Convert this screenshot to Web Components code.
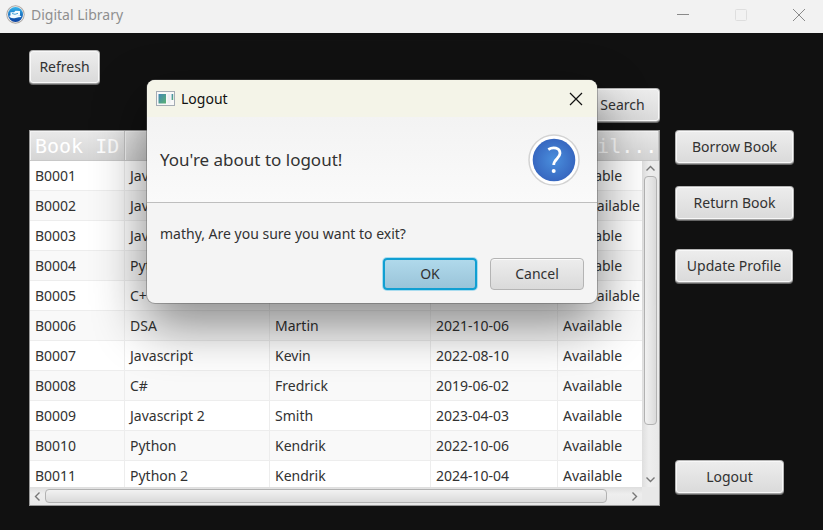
<!DOCTYPE html>
<html lang="en">
<head>
<meta charset="utf-8">
<title>Digital Library</title>
<style>
html, body { margin: 0; height: 100%; }
body { background: #111; color: #323232; font: 14px/20px "Noto Sans", "Open Sans", sans-serif; overflow: hidden; }
</style>
</head>
<body>
<app-window>
  <span slot="title">Digital Library</span>
  <library-view></library-view>
  <logout-alert slot="overlay">
    <span slot="title">Logout</span>
    <span slot="header">You're about to logout!</span>
    <span slot="message">mathy, Are you sure you want to exit?</span>
  </logout-alert>
</app-window>
<script>
const define = (name, html, setup) => customElements.define(name, class extends HTMLElement {
  constructor() {
    super();
    this.attachShadow({ mode: 'open' }).innerHTML = html;
    if (setup) setup(this, this.shadowRoot);
  }
});

define('fx-button', `
<style>
:host { display: block; }
button { box-sizing: border-box; width: 100%; height: 100%; min-height: 34px; margin: 0; padding: 0 9px; font: inherit; color: #323232; white-space: nowrap;
  border: 1px solid #b5b5b5; border-bottom-color: #a2a2a2; border-radius: 4px; background: linear-gradient(#ededed, #dadada); box-shadow: inset 0 0 0 1px #f8f8f8, 0 1px 0 #666; }
:host([plain]) button { min-height: 32px; border-color: #b4b4b4; box-shadow: inset 0 1px 0 #fafafa; }
:host([primary]) button { min-height: 32px; border: 2px solid #109fd2; background: linear-gradient(#b0d9eb, #9ac4d9); box-shadow: 0 0 0 1px #a9dcef; }
</style>
<button type="button"><slot></slot></button>`);

define('scroll-bar', `
<style>
:host { display: flex; align-items: center; background: linear-gradient(90deg, #dedede, #eee 40%, #e8e8e8); }
:host([vertical]) { flex-direction: column; }
:host(:not([vertical])) { background: linear-gradient(#dedede, #eee 40%, #e8e8e8); }
svg { flex: none; width: 15px; height: 15px; fill: none; stroke: #777; stroke-width: 1.4; }
:host(:not([vertical])) svg { transform: rotate(-90deg); }
.track { flex: 1; display: flex; align-self: stretch; padding: 2px 0; }
:host([vertical]) .track { flex-direction: column; padding: 0 2px; }
.thumb { box-sizing: border-box; flex: 0 0 var(--size); border: 1px solid #b2b2b2; border-radius: 4px; background: linear-gradient(#f2f2f2, #dadada); }
:host([vertical]) .thumb { background: linear-gradient(90deg, #f2f2f2, #dadada); }
</style>
<svg viewBox="0 0 15 15"><path d="M3.5 9.5l4-4 4 4"/></svg>
<div class="track"><div class="thumb"></div></div>
<svg viewBox="0 0 15 15"><path d="M3.5 5.5l4 4 4-4"/></svg>`);

const books = [
  ['B0001', 'Java', '', '', 'Available'],
  ['B0002', 'Java', '', '', 'Unavailable'],
  ['B0003', 'Java', '', '', 'Available'],
  ['B0004', 'Python', '', '', 'Available'],
  ['B0005', 'C++', '', '', 'Unavailable'],
  ['B0006', 'DSA', 'Martin', '2021-10-06', 'Available'],
  ['B0007', 'Javascript', 'Kevin', '2022-08-10', 'Available'],
  ['B0008', 'C#', 'Fredrick', '2019-06-02', 'Available'],
  ['B0009', 'Javascript 2', 'Smith', '2023-04-03', 'Available'],
  ['B0010', 'Python', 'Kendrik', '2022-10-06', 'Available'],
  ['B0011', 'Python 2', 'Kendrik', '2024-10-04', 'Available']
];

define('book-table', `
<style>
:host { display: grid; grid-template: 30px minmax(0, 1fr) 18px / minmax(0, 1fr) 17px; border: 1px solid #999; background: #e8e8e8; overflow: hidden; }
.view { grid-area: 1 / 1 / 3 / 3; overflow: hidden; }
table { width: 100%; border-collapse: separate; border-spacing: 0; table-layout: fixed; }
th, td { box-sizing: border-box; height: 30px; padding: 0 5px; text-align: left; white-space: nowrap; overflow: hidden; border-right: 1px solid #ededed; border-bottom: 1px solid #ededed; }
th { padding: 0 0 0 5px; color: #fff; font: 400 20px/24px "DejaVu Sans Mono", "Liberation Mono", monospace; background: linear-gradient(#e9e9e9, #d5d5d5); border-right-color: #c4c4c4; border-bottom-color: #c8c8c8; box-shadow: inset 1px 1px 0 #f3f3f3; }
th:last-child { padding-left: 3px; }
tbody tr { background: #fff; }
tbody tr:nth-child(even) { background: #f9f9f9; }
scroll-bar[vertical] { grid-area: 2 / 2; --size: 249px; }
scroll-bar:not([vertical]) { grid-area: 3 / 1; --size: 562px; }
</style>
<div class="view"><table>
<colgroup><col style="width:95px"><col style="width:145px"><col style="width:161px"><col style="width:127px"><col></colgroup>
<thead><tr><th>Book ID</th><th></th><th></th><th></th><th>Avail...</th></tr></thead>
<tbody></tbody></table></div>
<scroll-bar vertical></scroll-bar><scroll-bar></scroll-bar>`, (el, root) => {
  const body = root.querySelector('tbody');
  for (const book of books) {
    const row = body.insertRow();
    for (const value of book) row.insertCell().textContent = value;
  }
});

define('library-view', `
<style>
:host { box-sizing: border-box; flex: 1; min-height: 0; display: grid; grid-template-columns: minmax(0, 1fr) 119px; gap: 15px; padding: 17px 29px 24px; background: #111; }
.main { display: flex; flex-direction: column; min-height: 0; }
.refresh { align-self: flex-start; width: 71px; }
.search { align-self: flex-end; margin: 4px 0 8px; }
.search fx-button { width: 75px; }
book-table { flex: 1; min-height: 0; }
.side { display: flex; flex-direction: column; padding: 80px 0 12px; }
.borrow { margin-bottom: 22px; }
.return { margin-bottom: 29px; }
.update { width: 118px; }
.logout { width: 109px; margin-top: auto; }
</style>
<div class="main">
  <fx-button class="refresh">Refresh</fx-button>
  <div class="search"><fx-button>Search</fx-button></div>
  <book-table></book-table>
</div>
<div class="side">
  <fx-button class="borrow">Borrow Book</fx-button>
  <fx-button class="return">Return Book</fx-button>
  <fx-button class="update">Update Profile</fx-button>
  <fx-button class="logout">Logout</fx-button>
</div>`);

define('app-window', `
<style>
:host { position: relative; display: flex; flex-direction: column; height: 100vh; }
header { box-sizing: border-box; height: 33px; flex: none; display: flex; align-items: center; gap: 6px; padding: 0 17px 4px 6px; background: #f2f2f2; color: #8f8f8f; }
.logo { width: 19px; height: 19px; }
.controls { margin-left: auto; display: flex; gap: 44px; }
.controls button { display: block; width: 14px; height: 14px; padding: 0; border: 0; background: none; }
.controls svg { display: block; fill: none; stroke: #8a8a8a; }
</style>
<header>
  <svg class="logo" viewBox="0 0 19 19"><defs><linearGradient id="g" x2="0" y2="1"><stop stop-color="#35b4ec"/><stop offset="1" stop-color="#0a3fa0"/></linearGradient></defs><circle cx="9.500" cy="9.500" r="9.200" fill="#aaa5a2"/><circle cx="9.500" cy="9.500" r="8.300" fill="#eee"/><circle cx="9.500" cy="9.500" r="7.500" fill="url(#g)"/><path d="M4.500 7.200h3.500l1.500-1.500 4.500.3v5l-9.500-.4zM3.500 12q3 2 6 1t6-1l-1-1.200-11-.2z" fill="#f2fbff"/><path d="M6 8.500l3 .8 3-1" fill="none" stroke="#1686cc" stroke-width=".8"/></svg>
  <slot name="title"></slot>
  <div class="controls">
    <button type="button" aria-label="Minimize"><svg width="14" height="14"><path d="M1 6.500h12"/></svg></button>
    <button type="button" aria-label="Maximize" disabled><svg width="14" height="14"><rect x="1.500" y="1.500" width="11" height="11" rx="1" style="stroke:#dedede"/></svg></button>
    <button type="button" aria-label="Close"><svg width="14" height="14"><path d="M1 1l12 12M13 1L1 13"/></svg></button>
  </div>
</header>
<slot></slot>
<slot name="overlay"></slot>`);

define('logout-alert', `
<style>
:host { position: absolute; left: 147px; top: 80px; width: 450px; border-radius: 8px; overflow: hidden; background: #f4f4f4; box-shadow: 0 0 0 1px #5556, 0 20px 52px 2px #0007; }
.bar { box-sizing: border-box; height: 37px; display: flex; align-items: center; gap: 6px; padding: 0 14px 0 9px; background: #f4f4e8; color: #111; }
.bar button { width: 14px; height: 14px; margin-left: auto; padding: 0; border: 0; background: none; }
.bar svg { display: block; }
.header { box-sizing: border-box; height: 86px; display: flex; align-items: center; justify-content: space-between; padding: 0 17px 0 13px; border-bottom: 1px solid #bebebe; background: linear-gradient(#f3f3f3, #fafafa); font-size: 17px; line-height: 24px; }
.message { padding: 21px 13px 14px; }
.actions { display: flex; justify-content: flex-end; gap: 13px; padding: 0 13px 13px; }
.actions fx-button { width: 94px; }
</style>
<div class="bar">
  <svg width="19" height="16" viewBox="0 0 19 16"><defs><linearGradient id="p" x2="1" y2="1"><stop stop-color="#4187b5"/><stop offset="1" stop-color="#5ab173"/></linearGradient></defs><rect x=".5" y=".5" width="18" height="14" fill="#f8f8f8" stroke="#a5acb5"/><path d="M2.500 3h7.500v9.500h-7.500z" fill="url(#p)"/><path d="M11.500 3h3v9.500h-3z" fill="#eceef2"/><path d="M15.600 3h1.600v6h-1.600z" fill="url(#p)"/></svg>
  <slot name="title"></slot>
  <button type="button" aria-label="Close"><svg width="14" height="14"><path d="M1 1l12 12M13 1L1 13" stroke="#111" stroke-width="1.200"/></svg></button>
</div>
<div class="header">
  <slot name="header"></slot>
  <svg width="52" height="52" viewBox="0 0 52 52" aria-hidden="true"><defs><radialGradient id="q"><stop stop-color="#4a8fdd"/><stop offset="1" stop-color="#3767c0"/></radialGradient></defs><circle cx="26" cy="26" r="25" fill="#fff" stroke="#d3d3d3" stroke-width="1.500"/><circle cx="26" cy="26" r="21.300" fill="url(#q)"/><path d="M20.300 15.500C25 12.500 32 13.400 32 19.300c0 5-6.300 6-6.300 11.700" fill="none" stroke="#fff" stroke-width="2.800"/><circle cx="25.700" cy="37" r="2" fill="#fff"/></svg>
</div>
<div class="message"><slot name="message"></slot></div>
<div class="actions"><fx-button primary>OK</fx-button><fx-button plain>Cancel</fx-button></div>`, el => {
  el.setAttribute('role', 'dialog');
  el.setAttribute('aria-label', 'Logout');
});
</script>
</body>
</html>
